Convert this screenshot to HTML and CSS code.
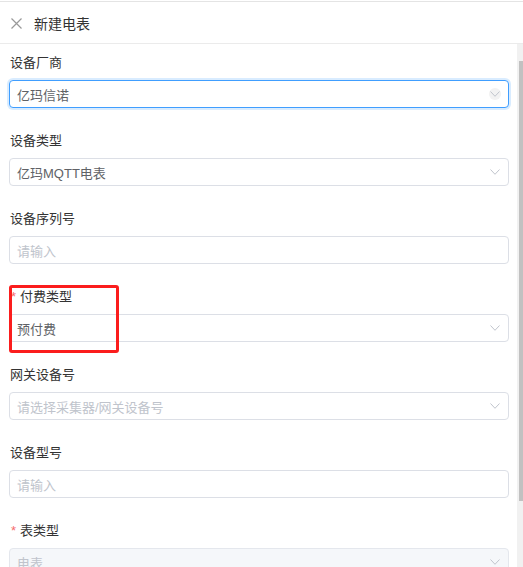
FILE: index.html
```html
<!DOCTYPE html>
<html lang="zh-CN">
<head>
  <meta charset="UTF-8">
  <meta name="viewport" content="width=device-width, initial-scale=1.0">
  <title>新建电表</title>
  <link rel="stylesheet" href="styles.css">
</head>
<body>
  <div class="drawer">
    <div class="drawer-header">
      <svg class="close-icon" width="11" height="11" viewBox="0 0 11 11">
        <path d="M0.5 0.5 L10.5 10.5 M10.5 0.5 L0.5 10.5" stroke="#999" stroke-width="1.2" fill="none"/>
      </svg>
      <span class="drawer-title">新建电表</span>
    </div>
    <div class="drawer-body">
      <form class="meter-form">
        <div class="form-item">
          <label class="form-label">设备厂商</label>
          <div class="select is-focus">
            <span class="select-value">亿玛信诺</span>
            <span class="select-arrow hovered"><svg width="10" height="6" viewBox="0 0 10 6"><path d="M0.5 0.5 L5 5.3 L9.5 0.5" stroke="#c0c4cc" fill="none"/></svg></span>
          </div>
        </div>
        <div class="form-item">
          <label class="form-label">设备类型</label>
          <div class="select">
            <span class="select-value">亿玛MQTT电表</span>
            <span class="select-arrow"><svg width="10" height="6" viewBox="0 0 10 6"><path d="M0.5 0.5 L5 5.3 L9.5 0.5" stroke="#c0c4cc" fill="none"/></svg></span>
          </div>
        </div>
        <div class="form-item">
          <label class="form-label">设备序列号</label>
          <div class="select">
            <span class="select-value placeholder">请输入</span>
          </div>
        </div>
        <div class="form-item">
          <label class="form-label required">付费类型</label>
          <div class="select">
            <span class="select-value">预付费</span>
            <span class="select-arrow"><svg width="10" height="6" viewBox="0 0 10 6"><path d="M0.5 0.5 L5 5.3 L9.5 0.5" stroke="#c0c4cc" fill="none"/></svg></span>
          </div>
          <div class="mark-box"></div>
        </div>
        <div class="form-item">
          <label class="form-label">网关设备号</label>
          <div class="select">
            <span class="select-value placeholder">请选择采集器/网关设备号</span>
            <span class="select-arrow"><svg width="10" height="6" viewBox="0 0 10 6"><path d="M0.5 0.5 L5 5.3 L9.5 0.5" stroke="#c0c4cc" fill="none"/></svg></span>
          </div>
        </div>
        <div class="form-item">
          <label class="form-label">设备型号</label>
          <div class="select">
            <span class="select-value placeholder">请输入</span>
          </div>
        </div>
        <div class="form-item">
          <label class="form-label required">表类型</label>
          <div class="select is-disabled">
            <span class="select-value">电表</span>
            <span class="select-arrow"><svg width="10" height="6" viewBox="0 0 10 6"><path d="M0.5 0.5 L5 5.3 L9.5 0.5" stroke="#c0c4cc" fill="none"/></svg></span>
          </div>
        </div>
      </form>
      <div class="scrollbar"><div class="scrollbar-thumb"></div></div>
    </div>
  </div>
</body>
</html>
```

FILE: styles.css
```css
html, body {
  margin: 0;
  height: 100%;
  overflow: hidden;
}
body {
  font-family: "Liberation Sans", "Noto Sans CJK SC", sans-serif;
  background: #fff;
  color: #333;
}
.drawer {
  height: 100%;
  display: flex;
  flex-direction: column;
}
.drawer-header {
  margin-top: 1px;
  border-top: 1px solid #e4e4e4;
  border-bottom: 1px solid #ebebeb;
  height: 41px;
  display: flex;
  align-items: center;
  padding-left: 11px;
  flex-shrink: 0;
}
.close-icon {
  margin-right: 12px;
  margin-top: 1px;
}
.drawer-title {
  font-size: 14px;
  color: #333;
}
.drawer-body {
  flex: 1;
  display: flex;
  min-height: 0;
  overflow: hidden;
}
.meter-form {
  flex: 1;
  padding: 9px 8px 0 9px;
}
.form-item {
  position: relative;
  margin-bottom: 23px;
}
.form-label {
  display: block;
  height: 20px;
  line-height: 20px;
  font-size: 13px;
  color: #333;
  padding-left: 1px;
  margin-bottom: 7px;
}
.form-label.required::before {
  content: "*";
  color: #f56c6c;
  margin-right: 4px;
  margin-left: 1px;
}
.select {
  box-sizing: border-box;
  height: 28px;
  border: 1px solid #dcdfe6;
  border-radius: 4px;
  display: flex;
  align-items: center;
  padding: 0 6px 0 7px;
  background: #fff;
}
.select.is-focus {
  border-color: #409eff;
  box-shadow: 0 0 0 2px rgba(64, 158, 255, 0.2);
}
.select.is-disabled {
  background: #f5f7fa;
  border-color: #e4e7ed;
}
.select.is-disabled .select-value {
  color: #c0c4cc;
}
.select-value {
  flex: 1;
  font-size: 13px;
  color: #606266;
}
.select-value.placeholder {
  color: #c0c4cc;
}
.select-arrow {
  width: 12px;
  height: 12px;
  border-radius: 50%;
  display: flex;
  align-items: center;
  justify-content: center;
  margin-right: 1px;
}
.select-arrow.hovered {
  background: #f2f2f2;
}
.mark-box {
  position: absolute;
  left: 0;
  top: -2px;
  width: 104px;
  height: 62px;
  border: 3px solid #fb1d1d;
  border-radius: 3px;
}
.scrollbar {
  width: 6px;
  background: #f1f1f1;
  display: flex;
  flex-direction: column;
  align-items: flex-end;
  padding-top: 17px;
}
.scrollbar-thumb {
  width: 4px;
  height: 440px;
  background: #c1c1c1;
}
```
